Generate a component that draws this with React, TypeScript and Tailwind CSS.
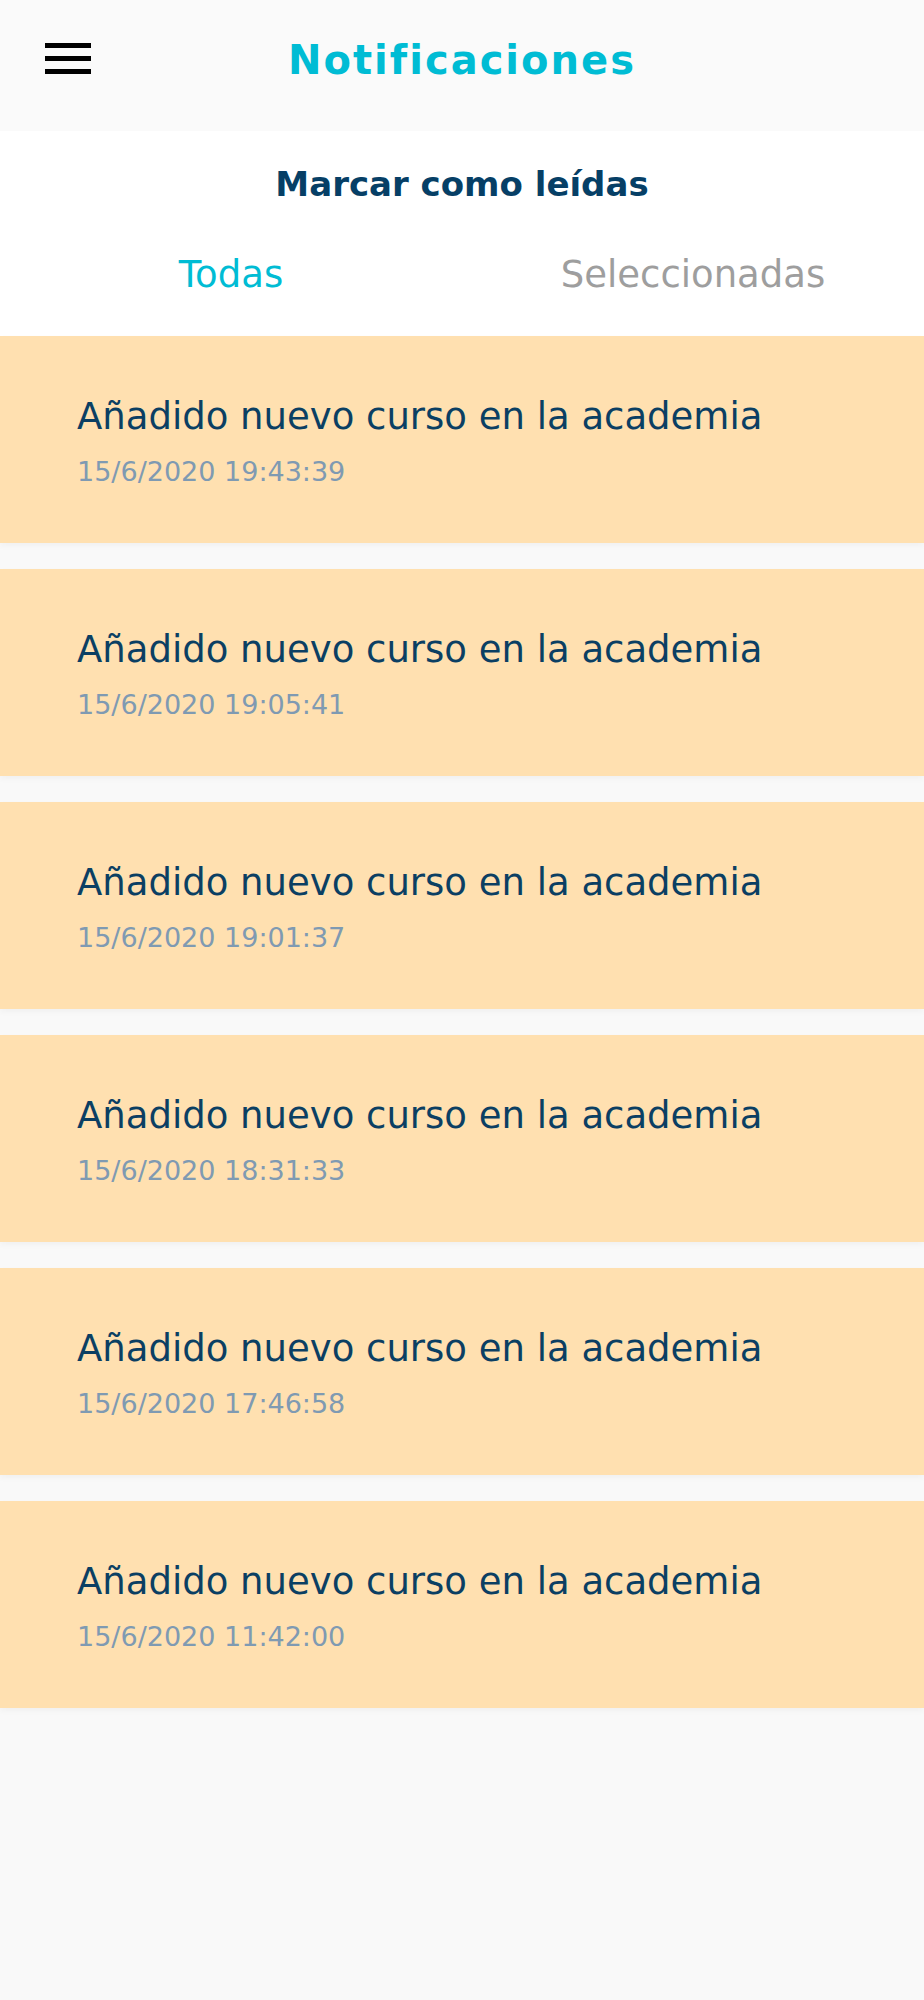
import React from 'react';

interface INotification {
  id: number;
  title: string;
  date: string;
}

const notifications: INotification[] = [
  { id: 1, title: 'Añadido nuevo curso en la academia', date: '15/6/2020 19:43:39' },
  { id: 2, title: 'Añadido nuevo curso en la academia', date: '15/6/2020 19:05:41' },
  { id: 3, title: 'Añadido nuevo curso en la academia', date: '15/6/2020 19:01:37' },
  { id: 4, title: 'Añadido nuevo curso en la academia', date: '15/6/2020 18:31:33' },
  { id: 5, title: 'Añadido nuevo curso en la academia', date: '15/6/2020 17:46:58' },
  { id: 6, title: 'Añadido nuevo curso en la academia', date: '15/6/2020 11:42:00' },
];

const font = "font-['DejaVu_Sans',sans-serif]";

const MenuIcon: React.FC = () => (
  <svg width="46" height="31" viewBox="0 0 46 31" fill="#000">
    <rect x="0" y="0" width="46" height="5" />
    <rect x="0" y="13" width="46" height="5" />
    <rect x="0" y="26" width="46" height="5" />
  </svg>
);

const App: React.FC = () => {
  return (
    <div className={`${font} min-h-[2000px] bg-[#f9f9f9]`}>
      {/* header */}
      <header className="grid h-[131px] grid-cols-[1fr_auto_1fr] items-start bg-[#fafafa] pt-[40px]">
        <button className="ml-[45px] mt-[3px] w-fit">
          <MenuIcon />
        </button>
        <h1 className="text-[40px] font-bold leading-[40px] tracking-[2px] text-[#00bcd4]">
          Notificaciones
        </h1>
        <div />
      </header>

      {/* actions + tabs */}
      <div className="bg-white pt-[36px] pb-[43px]">
        <p className="text-center text-[34px] font-bold leading-[34px] text-[#063f66]">
          Marcar como leídas
        </p>
        <div className="mt-[55px] grid grid-cols-2 text-[37px] leading-[37px]">
          <button className="text-center text-[#00bcd4]">Todas</button>
          <button className="text-center text-[#9e9e9e]">Seleccionadas</button>
        </div>
      </div>

      {/* list */}
      <ul className="flex flex-col gap-[26px]">
        {notifications.map((n) => (
          <li
            key={n.id}
            className="h-[207px] bg-[#ffe0b0] pl-[77px] pt-[62px] shadow-[0_3px_6px_rgba(0,0,0,0.035)]"
          >
            <p className="text-[37px] leading-[37px] text-[#0b3f63]">{n.title}</p>
            <p className="mt-[23px] text-[27px] leading-[27px] text-[#7f9ab2]">{n.date}</p>
          </li>
        ))}
      </ul>
    </div>
  );
};

export default App;
